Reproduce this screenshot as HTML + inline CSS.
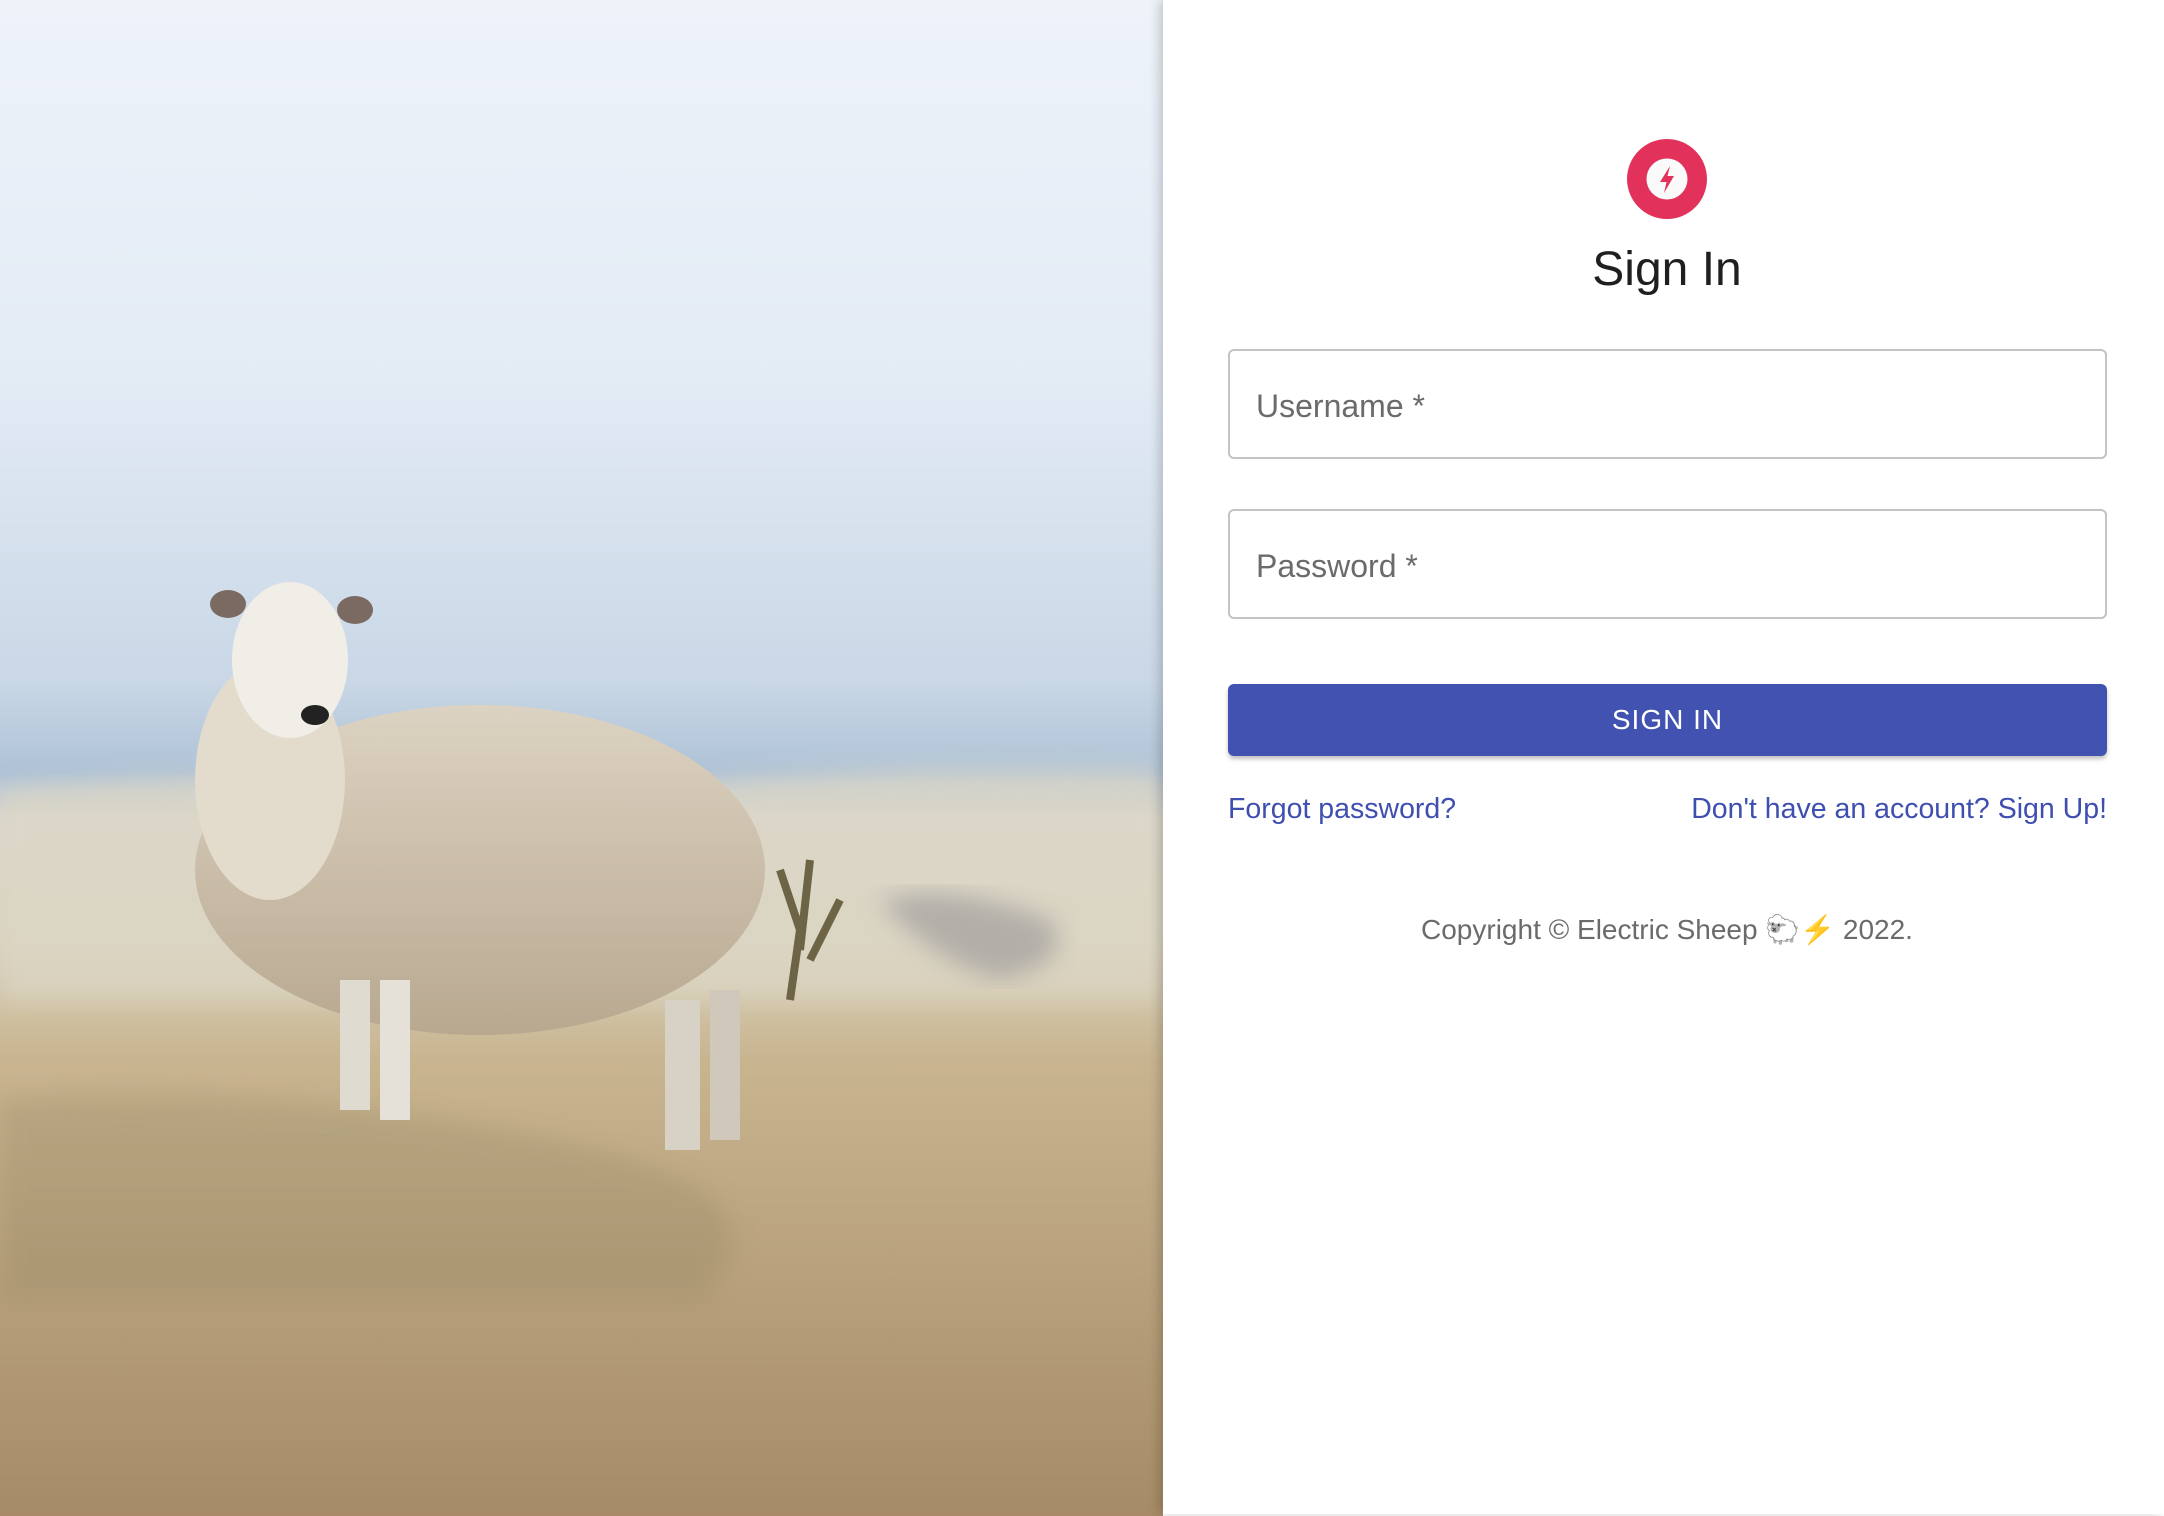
<!DOCTYPE html>
<html><head><meta charset="utf-8"><style>
*{box-sizing:border-box;margin:0;padding:0}
body{width:2164px;height:1516px;overflow:hidden;background:#fff;font-family:"Liberation Sans",Arial,sans-serif;position:relative}
#left{position:absolute;left:0;top:0;width:1163px;height:1516px}
#right{position:absolute;left:1163px;top:0;width:1001px;height:1514px;background:#fff;box-shadow:-4px 0 10px rgba(0,0,0,.18)}
.abs{position:absolute}
.field{position:absolute;left:1228px;width:879px;height:110px;border:2px solid #c4c4c4;border-radius:6px}
.field span{position:absolute;left:26px;top:37px;font-size:32px;color:#6b6b6b}
</style></head><body>
<svg id="left" viewBox="0 0 1163 1516" preserveAspectRatio="none">
<defs>
<linearGradient id="sky" x1="0" y1="0" x2="0" y2="1">
<stop offset="0" stop-color="#eef3fa"/><stop offset=".25" stop-color="#e3ebf5"/><stop offset=".45" stop-color="#c9d7e6"/><stop offset=".51" stop-color="#aec2d6"/><stop offset=".54" stop-color="#d8d6cc"/><stop offset=".62" stop-color="#d9d2bd"/><stop offset=".70" stop-color="#c8b48f"/><stop offset="1" stop-color="#a68b66"/>
</linearGradient>
<linearGradient id="wool" x1="0" y1="0" x2="0" y2="1"><stop offset="0" stop-color="#ddd3c2"/><stop offset="1" stop-color="#b8a890"/></linearGradient>
<filter id="bl"><feGaussianBlur stdDeviation="12"/></filter>
</defs>
<rect width="1163" height="1516" fill="url(#sky)"/>
<path d="M0 790 Q300 760 600 800 Q800 760 1163 770 L1163 1000 L0 1000Z" fill="#ddd7c6" opacity=".7" filter="url(#bl)"/>
<path d="M880 900 Q950 880 1050 920 Q1080 960 1000 980 Q930 960 880 900Z" fill="#8a8a90" opacity=".5" filter="url(#bl)"/>
<path d="M0 1100 Q300 1080 600 1150 Q800 1200 700 1300 L0 1300Z" fill="#7d7a55" opacity=".2" filter="url(#bl)"/>
<ellipse cx="480" cy="870" rx="285" ry="165" fill="url(#wool)"/>
<ellipse cx="270" cy="780" rx="75" ry="120" fill="#e3dbcc"/>
<ellipse cx="290" cy="660" rx="58" ry="78" fill="#f1eee8"/>
<ellipse cx="228" cy="604" rx="18" ry="14" fill="#7a6a62"/>
<ellipse cx="355" cy="610" rx="18" ry="14" fill="#7a6a62"/>
<ellipse cx="315" cy="715" rx="14" ry="10" fill="#222"/>
<rect x="340" y="980" width="30" height="130" fill="#e0dbd0"/>
<rect x="380" y="980" width="30" height="140" fill="#e6e1d8"/>
<rect x="665" y="1000" width="35" height="150" fill="#d8d2c6"/>
<rect x="710" y="990" width="30" height="150" fill="#cfc8bb"/>
<path d="M780 870 l20 60 l-10 70 M810 860 l-10 90 M840 900 l-30 60" stroke="#6d6345" stroke-width="8" fill="none"/>
</svg>
<div id="right"></div>
<svg class="abs" style="left:1627px;top:139px" width="80" height="80" viewBox="0 0 80 80">
<circle cx="40" cy="40" r="40" fill="#e2325c"/>
<circle cx="40" cy="40" r="20.5" fill="#fafafa"/>
<path d="M43 27 L33 43 L39.5 43 L37 54 L47 37 L40.5 37 Z" fill="#e2325c"/>
</svg>
<div class="abs" style="left:1163px;width:1008px;top:242px;text-align:center;font-size:48px;color:#1f1f1f">Sign In</div>
<div class="field" style="top:349px"><span>Username *</span></div>
<div class="field" style="top:509px"><span>Password *</span></div>
<div class="abs" style="left:1228px;top:684px;width:879px;height:72px;background:#4152b1;border-radius:6px;box-shadow:0 3px 4px rgba(0,0,0,.25);color:#fff;font-size:28px;letter-spacing:1px;text-align:center;line-height:72px">SIGN IN</div>
<div class="abs" style="left:1228px;top:793px;font-size:28.5px;color:#3f4fb0">Forgot password?</div>
<div class="abs" style="right:57px;top:793px;font-size:28.5px;color:#3f4fb0">Don't have an account? Sign Up!</div>
<div class="abs" style="left:1163px;width:1008px;top:913px;text-align:center;font-size:28px;color:#6b6b6b">Copyright © Electric Sheep <span style="color:#bbb">🐑</span><span style="color:#f3c94a">⚡</span> 2022.</div>
</body></html>
